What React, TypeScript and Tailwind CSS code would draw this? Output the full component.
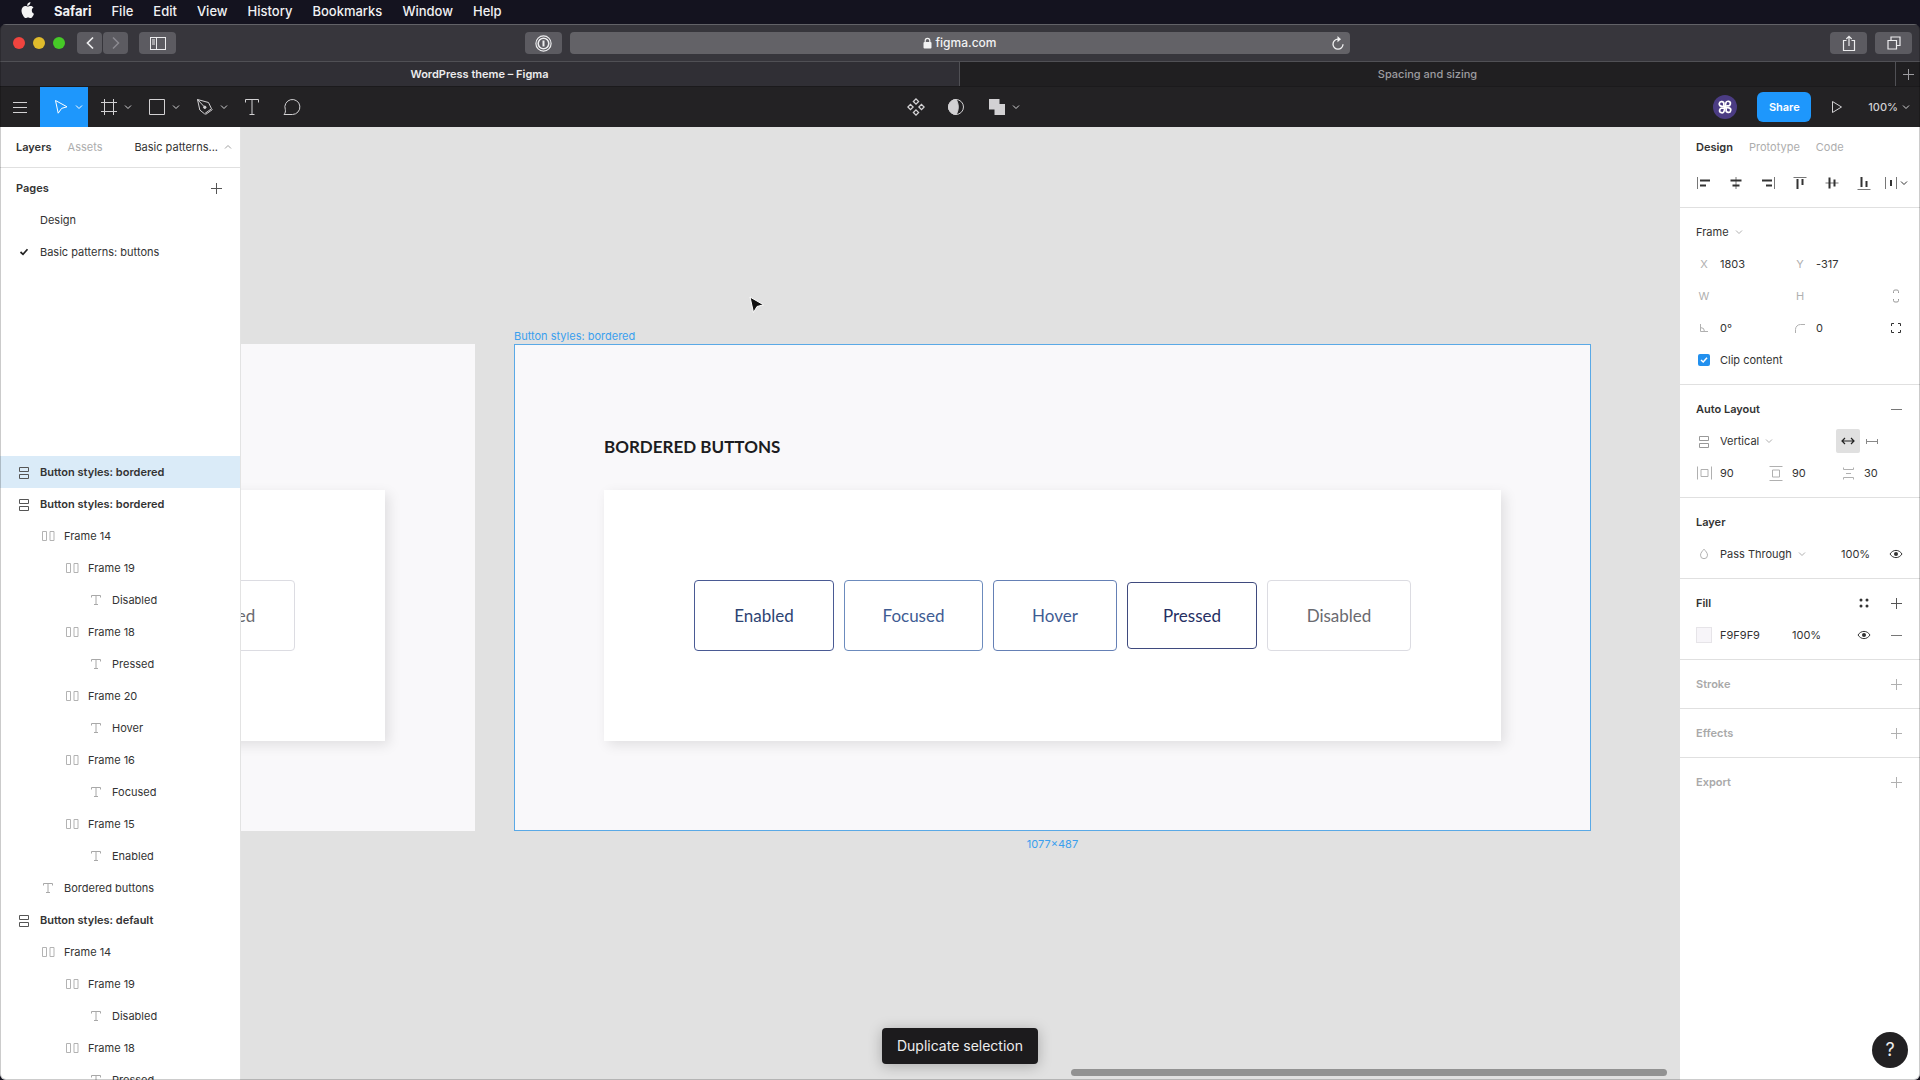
import React from "react";

type IconProps = { className?: string; children: React.ReactNode; w?: number; h?: number };

function Icon({ className = "", children, w = 16, h = 16 }: IconProps) {
  return (
    <svg
      width={w}
      height={h}
      viewBox={`0 0 ${w} ${h}`}
      fill="none"
      stroke="currentColor"
      strokeWidth={1}
      className={`shrink-0 ${className}`}
      aria-hidden="true"
    >
      {children}
    </svg>
  );
}

const Chevron = ({ className = "" }: { className?: string }) => (
  <Icon w={8} h={6} className={className}>
    <path d="M1 1.5 4 4.5 7 1.5" />
  </Icon>
);
const Plus = ({ className = "" }: { className?: string }) => (
  <Icon w={11} h={11} className={className}>
    <path d="M5.5 0v11M0 5.5h11" />
  </Icon>
);
const Minus = ({ className = "" }: { className?: string }) => (
  <Icon w={11} h={11} className={className}>
    <path d="M0 5.5h11" />
  </Icon>
);
const Eye = () => (
  <Icon w={14} h={10} className="text-[#333]">
    <path d="M1 5C2.6 2.6 4.6 1.4 7 1.4S11.4 2.6 13 5C11.4 7.4 9.4 8.6 7 8.6S2.6 7.4 1 5Z" />
    <circle cx="7" cy="5" r="2" fill="currentColor" stroke="none" />
  </Icon>
);
const VerticalStack = ({ className = "" }: { className?: string }) => (
  <Icon w={12} h={13} className={className}>
    <path d="M1.5 1.5h9v4h-9zM1.5 8.5h9v4h-9z" />
  </Icon>
);
const HorizontalStack = () => (
  <Icon w={13} h={12} className="text-[#b3b3b3]">
    <path d="M.5 1.5h4v9h-4zM8 1.5h4v9h-4z" />
  </Icon>
);
const TextGlyph = () => (
  <Icon w={12} h={12} className="text-[#a8a8a8]">
    <path d="M1.5 3.5v-2h9v2M6 1.5v9M4 10.5h4" />
  </Icon>
);

/* ---------- macOS menu bar ---------- */

const menus = ["File", "Edit", "View", "History", "Bookmarks", "Window", "Help"];

function MenuBar() {
  return (
    <nav className="flex h-6 shrink-0 items-center bg-[#14131f] pb-0.5 pl-5 text-[13px] font-medium text-[#f1f1f3]">
      <svg width="15" height="17" viewBox="0 0 15 17" fill="#f4f4f4" aria-label="Apple" className="mr-[19px] mb-0.5">
        <path d="M10.4 0c.1 1-.3 2-.9 2.700-.6.7-1.500 1.200-2.400 1.100-.1-1 .4-2 .9-2.600C8.600.6 9.600.1 10.400 0zM13.500 5.600c-1.100.7-1.700 1.600-1.700 2.900 0 1.500.8 2.700 2.200 3.200-.3 1-.8 1.900-1.400 2.700-.6.9-1.200 1.700-2.200 1.700-.9 0-1.200-.6-2.300-.6s-1.500.6-2.300.6c-1 0-1.700-.9-2.300-1.800C2.300 12.600 1.500 10.500 1.500 8.600c0-3.100 2-4.700 3.900-4.700 1 0 1.900.7 2.500.7s1.600-.7 2.800-.7c1.100 0 2.200.6 2.800 1.700z" />
      </svg>
      <div className="flex items-center gap-5">
        <button className="font-bold">Safari</button>
        {menus.map((m) => (
          <button key={m}>{m}</button>
        ))}
      </div>
    </nav>
  );
}

/* ---------- Safari chrome ---------- */

const chromeButton = "flex h-[22px] items-center justify-center rounded bg-[#5c5b61]";

function SafariChrome() {
  return (
    <header className="shrink-0 text-[#ececee]">
      <div className="grid h-[37px] grid-cols-[1fr_minmax(0,780px)_1fr] items-center border-t border-[#626267] bg-[#37363c]">
        <div className="flex items-center justify-between pr-2 pl-[13px]">
          <div className="flex items-center">
            <button aria-label="Close" className="mr-2 size-3 rounded-full bg-[#f0443f]" />
            <button aria-label="Minimize" className="mr-2 size-3 rounded-full bg-[#e0bb2c]" />
            <button aria-label="Full screen" className="mr-3 size-3 rounded-full bg-[#46c927]" />
            <button aria-label="Back" className={`${chromeButton} mr-px w-[25px]`}>
              <svg width="8" height="14" viewBox="0 0 8 14" fill="none" stroke="currentColor" strokeWidth="1.700">
                <path d="M7 1.500 1.500 7 7 12.500" />
              </svg>
            </button>
            <button aria-label="Forward" className={`${chromeButton} mr-[11px] w-[25px] text-[#8b8a90]`}>
              <svg width="8" height="14" viewBox="0 0 8 14" fill="none" stroke="currentColor" strokeWidth="1.500">
                <path d="M1 1.500 6.500 7 1 12.500" />
              </svg>
            </button>
            <button aria-label="Sidebar" className={`${chromeButton} w-[37px]`}>
              <Icon w={16} h={13}>
                <rect x=".5" y=".5" width="15" height="12" />
                <path d="M6.500 .5v12M2 3h3M2 5h3M2 7h3" />
              </Icon>
            </button>
          </div>
          <button aria-label="1Password" className={`${chromeButton} w-[37px]`}>
            <svg width="17" height="17" viewBox="0 0 17 17" fill="none" stroke="currentColor">
              <circle cx="8.500" cy="8.500" r="7.600" strokeWidth="1.200" />
              <circle cx="8.500" cy="8.500" r="5.300" strokeWidth="1.600" />
              <path d="M8.500 5.500v6" strokeWidth="2" />
            </svg>
          </button>
        </div>
        <div className="flex h-[22px] items-center rounded bg-[#636267] pr-[5px] pl-1.5 text-[#f2f2f3]">
          <span className="w-3" />
          <button className="flex flex-1 items-center justify-center gap-1 text-xs font-medium">
            <svg width="9" height="12" viewBox="0 0 9 12" fill="currentColor" aria-hidden="true">
              <rect x=".5" y="5" width="8" height="6.500" rx="1" />
              <path d="M2.200 5.500V3.600a2.300 2.300 0 0 1 4.600 0v1.900" fill="none" stroke="currentColor" strokeWidth="1.200" />
            </svg>
            figma.com
          </button>
          <button aria-label="Reload">
            <svg width="14" height="15" viewBox="0 0 14 15" fill="none" stroke="currentColor" strokeWidth="1.300">
              <path d="M7 3.200a5 5 0 1 0 5 5" />
              <path d="M6.500 0 10 3.200 6.500 6.200Z" fill="currentColor" stroke="none" />
            </svg>
          </button>
        </div>
        <div className="flex justify-end gap-2 pr-2">
          <button aria-label="Share page" className={`${chromeButton} w-[37px]`}>
            <svg width="14" height="17" viewBox="0 0 14 17" fill="none" stroke="currentColor" strokeWidth="1.200">
              <path d="M4.500 5.500H1.500v10h11v-10h-3M7 11V1.500M4.300 4 7 1.300 9.700 4" />
            </svg>
          </button>
          <button aria-label="Show tabs" className={`${chromeButton} w-[37px]`}>
            <svg width="14" height="14" viewBox="0 0 14 14" fill="none" stroke="currentColor" strokeWidth="1.200">
              <path d="M1 4.500h8.500V13H1zM4 4V1h9v8.500H10" />
            </svg>
          </button>
        </div>
      </div>
      <div className="flex h-[26px] border-y border-t-[#505055] border-b-[#1b1a1c] bg-[#201f21] text-[11px] text-[#9d9ca0]">
        <button className="w-[960px] shrink border-r border-[#505055] bg-[#302f35] font-semibold text-[#ececed]">
          WordPress theme – Figma
        </button>
        <button className="flex-1 font-medium">Spacing and sizing</button>
        <button aria-label="New tab" className="flex w-[25px] items-center justify-center border-l border-[#505055]">
          <Plus />
        </button>
      </div>
    </header>
  );
}

/* ---------- Figma toolbar ---------- */

function Tool({ label, active, children }: { label: string; active?: boolean; children: React.ReactNode }) {
  return (
    <button
      aria-label={label}
      className={`flex h-full w-12 items-center justify-center gap-1.5 pl-2 ${active ? "bg-[#1e97fc] text-white" : ""}`}
    >
      {children}
      <Chevron />
    </button>
  );
}

function Toolbar() {
  return (
    <div className="grid h-10 shrink-0 grid-cols-[1fr_auto_1fr] items-center bg-[#232224] text-[#d2d1d3]">
      <div className="flex h-full items-center">
        <button aria-label="Menu" className="flex h-full w-10 items-center justify-center">
          <Icon w={14} h={13}>
            <path d="M0 1.500h14M0 6.500h14M0 11.500h14" />
          </Icon>
        </button>
        <Tool label="Move" active>
          <Icon w={16} h={16}>
            <path d="M2.500 1.500 14 7.800 8.600 9.400 5.200 14.200Z" />
          </Icon>
        </Tool>
        <Tool label="Frame">
          <Icon w={18} h={18}>
            <path d="M4.500 1v16M13.500 1v16M1 4.500h16M1 13.500h16" />
          </Icon>
        </Tool>
        <Tool label="Rectangle">
          <Icon w={18} h={18}>
            <path d="M1.500 1.500h15v15h-15z" />
          </Icon>
        </Tool>
        <Tool label="Pen">
          <Icon w={18} h={18}>
            <path d="M1.500 1.500 3.800 12 8.500 15.800 15.500 10.700 12.500 4.500ZM1.500 1.500 8 8.500" />
            <path d="M9.500 16.500 16.500 11.500" />
            <circle cx="8.800" cy="9.300" r="1.200" fill="currentColor" />
          </Icon>
        </Tool>
        <button aria-label="Text" className="flex h-full w-10 items-center justify-center">
          <Icon w={16} h={18}>
            <path d="M1.500 4.500v-3h13v3M8 1.500v15M5.500 16.500h5" />
          </Icon>
        </button>
        <button aria-label="Comment" className="flex h-full w-10 items-center justify-center">
          <Icon w={18} h={18}>
            <path d="M1 16.500h8.500A7.500 7.500 0 1 0 2.300 11.500C2.700 13.200 2.400 15 1 16.500Z" />
          </Icon>
        </button>
      </div>
      <div className="flex h-full items-center">
        <button aria-label="Create component" className="flex w-10 justify-center">
          <Icon w={18} h={18}>
            <path d="M9 .9 11.600 3.500 9 6.100 6.400 3.500ZM9 11.900 11.600 14.500 9 17.100 6.400 14.500ZM3.500 6.400 6.100 9 3.500 11.600.9 9ZM14.500 6.400 17.100 9 14.500 11.600 11.900 9Z" strokeWidth="1.300" />
          </Icon>
        </button>
        <button aria-label="Use as mask" className="flex w-10 justify-center">
          <Icon w={18} h={18}>
            <circle cx="9" cy="9" r="7.500" />
            <path d="M9 1.500a7.500 7.500 0 0 0 0 15c3-3.700 3-11.300 0-15Z" fill="currentColor" />
          </Icon>
        </button>
        <Tool label="Boolean groups">
          <Icon w={18} h={18}>
            <path d="M1 1h10.500v5H17v11H6.500v-5.500H1z" fill="currentColor" stroke="none" />
          </Icon>
        </Tool>
      </div>
      <div className="flex h-full items-center justify-end pr-2.5">
        <button aria-label="Account" className="mr-5 flex size-6 items-center justify-center rounded-full bg-[#4b3c83] text-white">
          <svg width="18" height="18" viewBox="0 0 18 18" fill="none" stroke="currentColor" strokeWidth="1.700">
            <g transform="rotate(12 9 9)">
              <path d="M9 9V5a2.300 2.300 0 1 1 2.300 2.300Q9.600 7.300 9 9" />
              <path d="M9 9h4a2.300 2.300 0 1 1-2.300 2.300Q10.700 9.600 9 9" />
              <path d="M9 9v4a2.300 2.300 0 1 1-2.300-2.300Q8.400 10.700 9 9" />
              <path d="M9 9H5a2.300 2.300 0 1 1 2.300-2.300Q7.300 8.400 9 9" />
            </g>
          </svg>
        </button>
        <button className="h-[30px] w-[54px] rounded-md bg-[#1e97fc] text-[11px] font-semibold text-white">Share</button>
        <button aria-label="Present" className="flex w-[57px] justify-center pr-1.5">
          <Icon w={12} h={14}>
            <path d="M1.500 1.500 10.500 7 1.500 12.500Z" />
          </Icon>
        </button>
        <button className="flex items-center gap-1 text-[11px] font-medium">
          100%
          <Chevron />
        </button>
      </div>
    </div>
  );
}

/* ---------- Left panel ---------- */

type Layer = { name: string; depth: number; kind: "v" | "h" | "t"; selected?: boolean };

const layers: Layer[] = [
  { name: "Button styles: bordered", depth: 0, kind: "v", selected: true },
  { name: "Button styles: bordered", depth: 0, kind: "v" },
  { name: "Frame 14", depth: 1, kind: "h" },
  { name: "Frame 19", depth: 2, kind: "h" },
  { name: "Disabled", depth: 3, kind: "t" },
  { name: "Frame 18", depth: 2, kind: "h" },
  { name: "Pressed", depth: 3, kind: "t" },
  { name: "Frame 20", depth: 2, kind: "h" },
  { name: "Hover", depth: 3, kind: "t" },
  { name: "Frame 16", depth: 2, kind: "h" },
  { name: "Focused", depth: 3, kind: "t" },
  { name: "Frame 15", depth: 2, kind: "h" },
  { name: "Enabled", depth: 3, kind: "t" },
  { name: "Bordered buttons", depth: 1, kind: "t" },
  { name: "Button styles: default", depth: 0, kind: "v" },
  { name: "Frame 14", depth: 1, kind: "h" },
  { name: "Frame 19", depth: 2, kind: "h" },
  { name: "Disabled", depth: 3, kind: "t" },
  { name: "Frame 18", depth: 2, kind: "h" },
  { name: "Pressed", depth: 3, kind: "t" },
];

const indents = ["pl-2", "pl-8", "pl-14", "pl-20"];

function LeftPanel() {
  return (
    <aside className="flex w-[241px] shrink-0 flex-col overflow-hidden border-r border-[#e3e3e3] bg-white">
      <div className="flex h-[41px] shrink-0 items-center border-b border-[#e0e0e0] pr-2 pl-4">
        <button className="mr-4 font-semibold">Layers</button>
        <button className="text-[#adadad]">Assets</button>
        <button className="ml-auto flex items-center gap-1.5">
          Basic patterns...
          <Chevron className="rotate-180 text-[#a0a0a0]" />
        </button>
      </div>
      <section className="h-72 shrink-0 pt-1">
        <div className="flex h-8 items-center justify-between pr-[18px] pl-4">
          <h2 className="font-semibold">Pages</h2>
          <button aria-label="Add page">
            <Plus className="text-[#555]" />
          </button>
        </div>
        <button className="flex h-8 w-full items-center pl-10">Design</button>
        <button className="flex h-8 w-full items-center pl-2">
          <span className="flex w-8 justify-center">
            <svg width="10" height="8" viewBox="0 0 10 8" fill="none" stroke="#222" strokeWidth="1.700" aria-hidden="true">
              <path d="M1.500 4 4 6.300 8.500 1.200" />
            </svg>
          </span>
          Basic patterns: buttons
        </button>
      </section>
      <ul>
        {layers.map((l, i) => (
          <li key={i}>
            <button
              className={`flex h-8 w-full items-center ${indents[l.depth]} ${l.selected ? "bg-[#daebf8]" : ""} ${
                l.kind === "v" ? "font-semibold" : ""
              }`}
            >
              <span className="flex w-8 shrink-0 justify-center">
                {l.kind === "v" && <VerticalStack className="text-[#555]" />}
                {l.kind === "h" && <HorizontalStack />}
                {l.kind === "t" && <TextGlyph />}
              </span>
              {l.name}
            </button>
          </li>
        ))}
      </ul>
    </aside>
  );
}

/* ---------- Canvas ---------- */

const samples = [
  { label: "Enabled", style: "h-[71px] w-[140px] border-[#4a5a94] text-[#2d4373]" },
  { label: "Focused", style: "h-[71px] w-[139px] border-[#6c8bbd] text-[#3f5c93]" },
  { label: "Hover", style: "h-[71px] w-[124px] border-[#6580b5] text-[#3f5c93]" },
  { label: "Pressed", style: "h-[67px] w-[130px] border-[#3f4a7e] text-[#262f63]" },
  { label: "Disabled", style: "h-[71px] w-[144px] border-[#dcdce2] text-[#6a6a70]" },
];

function Sample({ label, style }: { label: string; style: string }) {
  return <button className={`shrink-0 rounded border text-center font-[Lato] text-[17px] ${style}`}>{label}</button>;
}

const cardShadow = "bg-white shadow-[4px_4px_12px_rgba(0,0,0,0.1)]";

function Canvas() {
  return (
    <main className="relative min-w-0 flex-1 overflow-hidden bg-[#e1e1e1]">
      <div className="absolute top-[217px] left-0 flex h-[487px] w-[234px] items-end justify-end overflow-hidden bg-[#f9f8fa] py-[90px] pr-[90px]">
        <div className={`flex shrink-0 items-center p-[90px] ${cardShadow}`}>
          <Sample label="Disabled" style={samples[4].style} />
        </div>
      </div>

      <span className="absolute top-[201px] left-[273px] text-[#3a9fee]">Button styles: bordered</span>
      <div className="absolute top-[217px] left-[273px] flex flex-col gap-[30px] bg-[#f9f8fa] p-[90px] outline -outline-offset-1 outline-[#5aa9e6]">
        <h1 className="font-[Lato] text-[17px] leading-[26px] font-bold text-[#1c1c20] uppercase">Bordered buttons</h1>
        <div className={`flex items-center gap-2.5 p-[90px] ${cardShadow}`}>
          {samples.map((s) => (
            <Sample key={s.label} {...s} />
          ))}
        </div>
        <span className="absolute top-full left-1/2 mt-[5px] -translate-x-1/2 text-[#3a9fee]">1077×487</span>
      </div>

      <svg width="18" height="20" viewBox="0 0 18 20" className="absolute top-[169px] left-[507px]" aria-hidden="true">
        <path d="M2 1 15.500 8.800 9 10.500 5.500 16.500Z" fill="#111" stroke="#fff" strokeWidth="1" />
      </svg>

      <div className="absolute right-[13px] bottom-1 h-[7px] w-[596px] rounded-full bg-[#929292]" />
    </main>
  );
}

/* ---------- Right panel ---------- */

function Section({ children }: { children: React.ReactNode }) {
  return <section className="border-b border-[#e0e0e0] py-2">{children}</section>;
}

function Row({ children }: { children: React.ReactNode }) {
  return <div className="flex h-8 items-center px-2">{children}</div>;
}

function Cell({ children }: { children?: React.ReactNode }) {
  return <span className="flex w-8 shrink-0 items-center justify-center text-[#b0b0b0]">{children}</span>;
}

function Field({ label, mark, value, width = "w-24" }: { label: string; mark: React.ReactNode; value: string; width?: string }) {
  return (
    <label className={`flex shrink-0 items-center ${width}`}>
      <Cell>{mark}</Cell>
      <input aria-label={label} defaultValue={value} className="min-w-0 flex-1 outline-none" />
    </label>
  );
}

function Select({ label, value }: { label: string; value: string }) {
  return (
    <label className="flex items-center gap-1.5">
      <select aria-label={label} className="field-sizing-content appearance-none bg-transparent outline-none">
        <option>{value}</option>
      </select>
      <Chevron className="text-[#b0b0b0]" />
    </label>
  );
}

function Empty({ title }: { title: string }) {
  return (
    <Row>
      <h2 className="flex-1 pl-2 font-semibold text-[#a9a9a9]">{title}</h2>
      <button aria-label={`Add ${title}`}>
        <Cell>
          <Plus />
        </Cell>
      </button>
    </Row>
  );
}

const alignIcons: { label: string; thin: string; bold: string }[] = [
  { label: "Align left", thin: "M1.500 2v12", bold: "M4 5.500h10M4 10.500h6" },
  { label: "Align horizontal centers", thin: "M8 2v12", bold: "M2.500 5.500h11M4.500 10.500h7" },
  { label: "Align right", thin: "M14.500 2v12", bold: "M2 5.500h10M6 10.500h6" },
  { label: "Align top", thin: "M1.500 2.500h13", bold: "M5.500 4v10M10.500 4v6" },
  { label: "Align vertical centers", thin: "M1.500 8h13", bold: "M5.500 2.500v11M10.500 4.500v7" },
  { label: "Align bottom", thin: "M1.500 14.500h13", bold: "M5.500 2v10M10.500 6v6" },
];

function RightPanel() {
  return (
    <aside className="w-60 shrink-0 bg-white">
      <section className="border-b border-[#e0e0e0] pb-2">
        <div className="flex h-10 items-center gap-4 px-4">
          <button className="font-semibold">Design</button>
          <button className="text-[#adadad]">Prototype</button>
          <button className="text-[#adadad]">Code</button>
        </div>
        <Row>
          {alignIcons.map((a) => (
            <button key={a.label} aria-label={a.label} className="flex w-8 justify-center text-[#333]">
              <Icon>
                <path d={a.thin} stroke="#777" />
                <path d={a.bold} strokeWidth="2" />
              </Icon>
            </button>
          ))}
          <button aria-label="Tidy up" className="flex w-8 items-center justify-center text-[#333]">
            <Icon w={14} h={16}>
              <path d="M1.500 2v12M12.500 2v12" stroke="#777" />
              <path d="M7 5v6" strokeWidth="2" />
            </Icon>
            <Chevron className="ml-0.5" />
          </button>
        </Row>
      </section>

      <Section>
        <Row>
          <div className="pl-2">
            <Select label="Element type" value="Frame" />
          </div>
        </Row>
        <Row>
          <Field label="X" mark="X" value="1803" />
          <Field label="Y" mark="Y" value="-317" />
        </Row>
        <Row>
          <Field label="Width" mark="W" value="" />
          <Field label="Height" mark="H" value="" />
          <button aria-label="Constrain proportions">
            <Cell>
              <Icon w={8} h={16}>
                <path
                  d="M1.500 5V3.500a1.500 1.500 0 0 1 1.500-1.500h2a1.500 1.500 0 0 1 1.500 1.500V5M1.500 11v1.500a1.500 1.500 0 0 0 1.500 1.500h2a1.500 1.500 0 0 0 1.500-1.500V11"
                  stroke="#999"
                />
              </Icon>
            </Cell>
          </button>
        </Row>
        <Row>
          <Field
            label="Rotation"
            mark={
              <Icon w={10} h={10}>
                <path d="M1.500 1v7.500H9M1.500 4.500a4 4 0 0 1 4 4" />
              </Icon>
            }
            value="0°"
          />
          <Field
            label="Corner radius"
            mark={
              <Icon w={10} h={10}>
                <path d="M.5 10V6.500a5 5 0 0 1 5-5H10" />
              </Icon>
            }
            value="0"
          />
          <button aria-label="Independent corners" className="flex w-8 justify-center text-[#333]">
            <Icon w={12} h={12}>
              <path d="M1.500 4V1.500H4M8 1.500h2.500V4M10.500 8v2.500H8M4 10.500H1.500V8" />
            </Icon>
          </button>
        </Row>
        <Row>
          <label className="flex items-center">
            <Cell>
              <span className="relative flex size-3">
                <input type="checkbox" defaultChecked className="size-3 appearance-none rounded-xs bg-[#2290ee]" />
                <svg
                  width="12"
                  height="12"
                  viewBox="0 0 12 12"
                  fill="none"
                  stroke="#fff"
                  strokeWidth="1.500"
                  className="pointer-events-none absolute inset-0"
                >
                  <path d="M3 6 5.200 8 9 3.800" />
                </svg>
              </span>
            </Cell>
            Clip content
          </label>
        </Row>
      </Section>

      <Section>
        <Row>
          <h2 className="flex-1 pl-2 font-semibold">Auto Layout</h2>
          <button aria-label="Remove auto layout">
            <Cell>
              <Minus className="text-[#777]" />
            </Cell>
          </button>
        </Row>
        <Row>
          <Cell>
            <VerticalStack className="text-[#999]" />
          </Cell>
          <Select label="Direction" value="Vertical" />
          <div className="ml-auto flex pr-7">
            <button aria-label="Auto width" className="flex size-6 items-center justify-center rounded-xs bg-[#e0e0e0] text-[#222]">
              <Icon w={14} h={8}>
                <path d="M1 4h12M4 1 1 4l3 3M10 1l3 3-3 3" strokeWidth="1.200" />
              </Icon>
            </button>
            <button aria-label="Fixed width" className="flex size-6 items-center justify-center text-[#888]">
              <Icon w={12} h={7}>
                <path d="M.5 1v5M11.500 1v5M1 3.500h10" />
              </Icon>
            </button>
          </div>
        </Row>
        <Row>
          <Field
            label="Horizontal padding"
            width="w-[72px]"
            mark={
              <Icon w={15} h={14}>
                <path d="M.5 .5v13M14.500 .5v13M4 3.500h7v7H4z" />
              </Icon>
            }
            value="90"
          />
          <Field
            label="Vertical padding"
            width="w-[72px]"
            mark={
              <Icon w={14} h={15}>
                <path d="M.5 .5h13M.5 14.500h13M3.500 4h7v7h-7z" />
              </Icon>
            }
            value="90"
          />
          <Field
            label="Spacing between items"
            width="w-[72px]"
            mark={
              <Icon w={13} h={13}>
                <path d="M1.500 .5v2h10v-2M1.500 12.500v-2h10v2M4 6.500h5" />
              </Icon>
            }
            value="30"
          />
        </Row>
      </Section>

      <Section>
        <Row>
          <h2 className="pl-2 font-semibold">Layer</h2>
        </Row>
        <Row>
          <Cell>
            <Icon w={10} h={12}>
              <path d="M5 1.200C6.500 3 8.500 4.800 8.500 7.200a3.500 3.500 0 0 1-7 0C1.500 4.800 3.500 3 5 1.200Z" />
            </Icon>
          </Cell>
          <Select label="Blend mode" value="Pass Through" />
          <input aria-label="Layer opacity" defaultValue="100%" className="ml-auto w-[39px] outline-none" />
          <button aria-label="Toggle layer" className="flex w-8 justify-center">
            <Eye />
          </button>
        </Row>
      </Section>

      <Section>
        <Row>
          <h2 className="flex-1 pl-2 font-semibold">Fill</h2>
          <button aria-label="Fill styles" className="flex w-8 justify-center text-[#333]">
            <Icon w={10} h={10}>
              <g fill="currentColor" stroke="none">
                <circle cx="2" cy="2" r="1.500" />
                <circle cx="8" cy="2" r="1.500" />
                <circle cx="2" cy="8" r="1.500" />
                <circle cx="8" cy="8" r="1.500" />
              </g>
            </Icon>
          </button>
          <button aria-label="Add fill">
            <Cell>
              <Plus className="text-[#555]" />
            </Cell>
          </button>
        </Row>
        <Row>
          <Cell>
            <button aria-label="Fill colour" className="size-4 border border-[#e6e4e8] bg-[#f7f5f9]" />
          </Cell>
          <input aria-label="Fill hex" defaultValue="F9F9F9" className="w-[72px] outline-none" />
          <input aria-label="Fill opacity" defaultValue="100%" className="w-10 outline-none" />
          <button aria-label="Toggle fill" className="ml-auto flex w-8 justify-center">
            <Eye />
          </button>
          <button aria-label="Remove fill">
            <Cell>
              <Minus className="text-[#777]" />
            </Cell>
          </button>
        </Row>
      </Section>

      <Section>
        <Empty title="Stroke" />
      </Section>
      <Section>
        <Empty title="Effects" />
      </Section>
      <div className="py-2">
        <Empty title="Export" />
      </div>
    </aside>
  );
}

export default function App() {
  return (
    <div className="flex h-screen flex-col overflow-hidden bg-[#14131f] font-[Inter,sans-serif] text-[11px] leading-4 whitespace-nowrap text-[#333]">
      <MenuBar />
      <div className="relative flex min-h-0 flex-1 flex-col overflow-hidden rounded-md">
        <SafariChrome />
        <Toolbar />
        <div className="flex min-h-0 flex-1">
          <LeftPanel />
          <Canvas />
          <RightPanel />
        </div>
        <div className="pointer-events-none absolute inset-0 rounded-md border border-t-0 border-black/20" />
        <div
          role="status"
          className="absolute bottom-4 left-1/2 -translate-x-1/2 rounded bg-[#1c1b1d] px-[15px] py-2 text-sm leading-5 text-[#ededee] shadow-[0_2px_14px_rgba(0,0,0,0.25)]"
        >
          Duplicate selection
        </div>
        <button
          aria-label="Help"
          className="absolute right-3 bottom-3 size-9 rounded-full bg-[#222123] text-lg text-[#ededee]"
        >
          ?
        </button>
      </div>
    </div>
  );
}
